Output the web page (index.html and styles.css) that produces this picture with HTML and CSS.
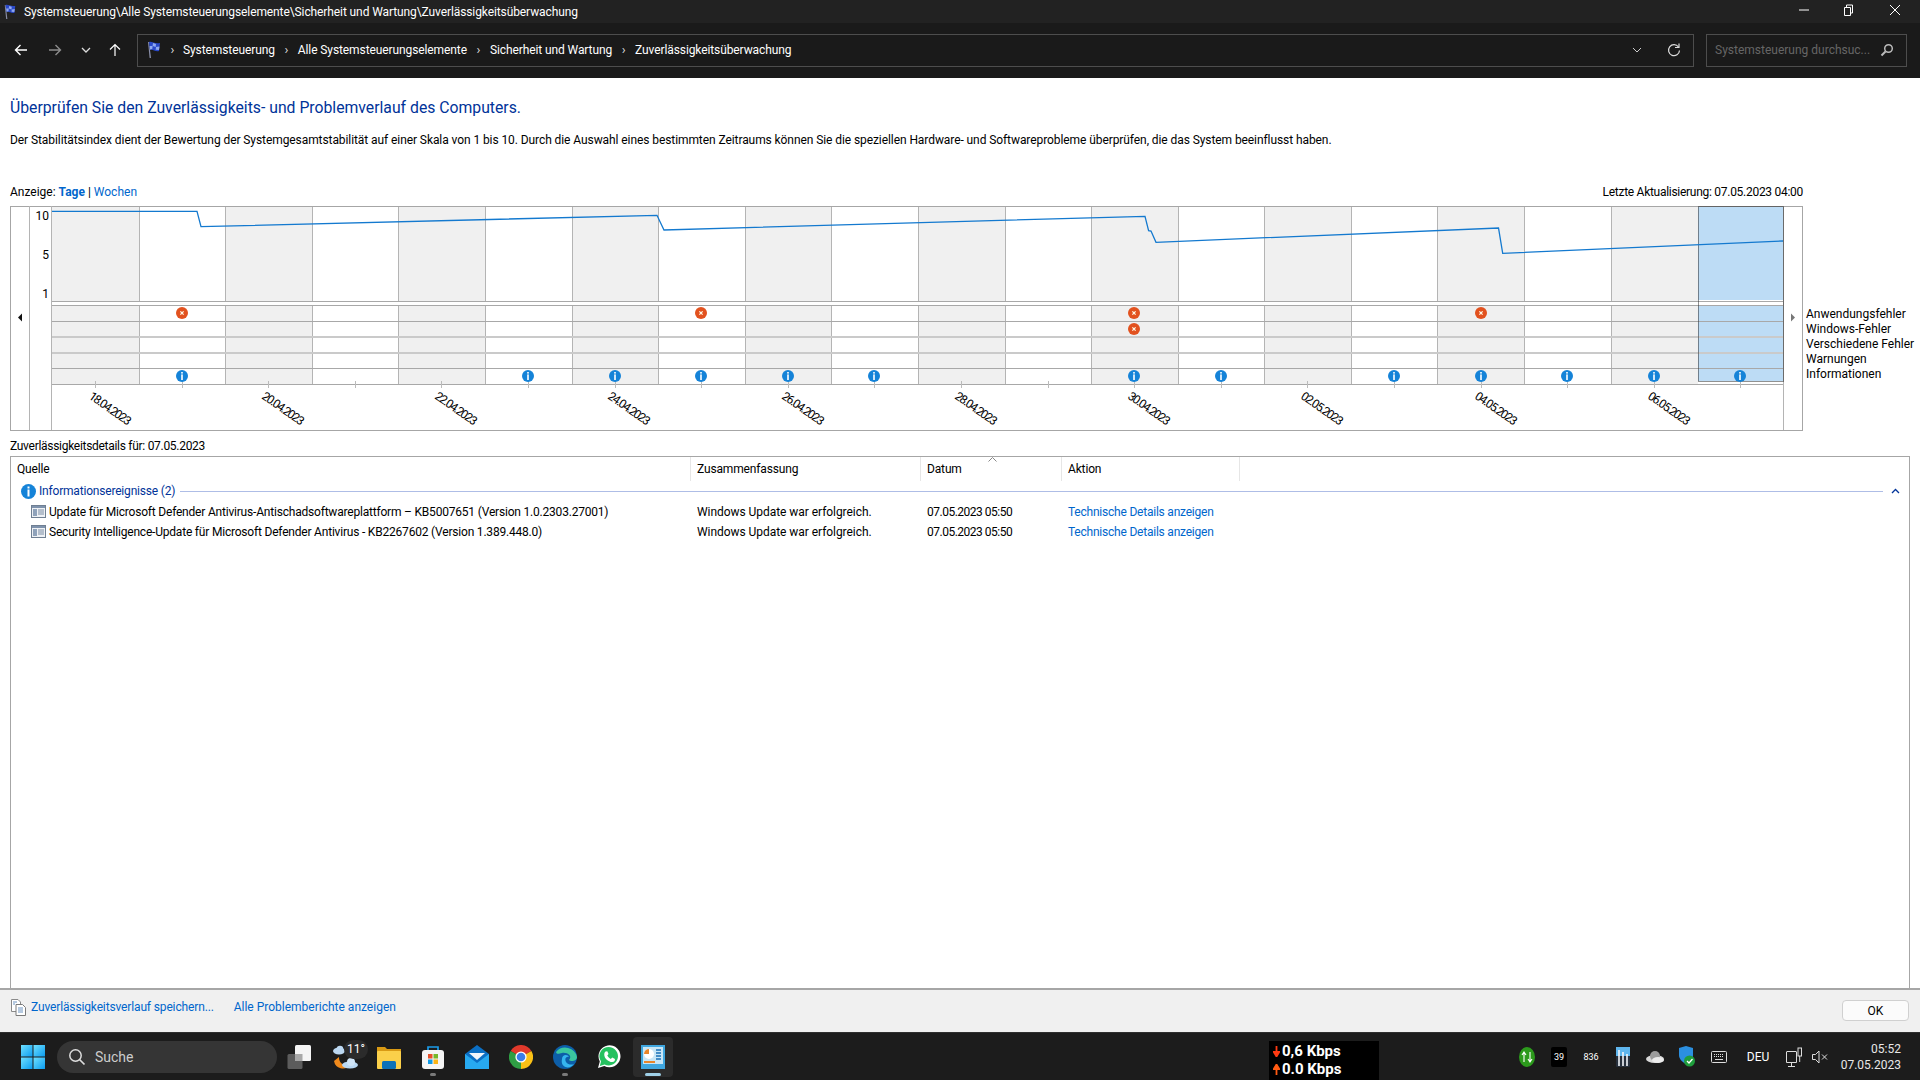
FILE: index.html
```html
<!DOCTYPE html>
<html lang="de">
<head>
<meta charset="utf-8">
<title>Zuverlässigkeitsüberwachung</title>
<link rel="stylesheet" href="styles.css">
</head>
<body>
<svg class="defs" width="0" height="0">
  <defs>
    <symbol id="flag" viewBox="0 0 16 18">
      <path d="M2 1 L3 1 L5 17 L3.6 17 Z" fill="#8a8fa8"/>
      <path d="M3 1 C6 0 8 3 14 2 L13 10 C9 11 7 8 4 9 Z" fill="#2a49c8"/>
      <path d="M7 2 L10 3 L9.7 6 L6.6 5 Z M3.6 5 L6.6 5 L6.3 8 L4 8.6 Z M10 6 L13.5 5.6 L13 9 L9.7 8.8 Z" fill="#8fa8f0"/>
    </symbol>
    <symbol id="err" viewBox="0 0 12 12">
      <circle cx="6" cy="6" r="6" fill="#e2521f"/>
      <path d="M4.4 4.4 L7.6 7.6 M7.6 4.4 L4.4 7.6" stroke="#ffe" stroke-width="1.2"/>
    </symbol>
    <symbol id="info" viewBox="0 0 12 12">
      <circle cx="6" cy="6" r="6" fill="#1583d8"/>
      <rect x="5.2" y="2" width="1.6" height="1.6" fill="#fff"/>
      <rect x="5.2" y="4.4" width="1.6" height="5.6" fill="#fff"/>
    </symbol>
    <symbol id="sheet" viewBox="0 0 15 15">
      <rect x="0.5" y="1.5" width="14" height="12" fill="#eef1f5" stroke="#6f7f92"/>
      <rect x="1" y="2" width="13" height="2" fill="#7f93ad"/>
      <rect x="2" y="5" width="4" height="7" fill="#8fa2ba"/>
      <path d="M7 6 H13 M7 8 H13 M7 10 H13" stroke="#7b8ca3"/>
    </symbol>
  </defs>
</svg>

<header class="titlebar">
  <svg class="flag-small"><use href="#flag"/></svg>
  <span class="title-text">Systemsteuerung\Alle Systemsteuerungselemente\Sicherheit und Wartung\Zuverlässigkeitsüberwachung</span>
  <div class="win-controls">
    <svg class="win-btn" viewBox="0 0 12 12"><path d="M1 6 H11" stroke="#fff"/></svg>
    <svg class="win-btn win-restore" viewBox="0 0 12 12"><path d="M2.5 3.5 H8.5 V11.5 H2.5 Z M4.5 3.5 V1 H10.5 V9 H8.5" stroke="#fff" fill="none"/></svg>
    <svg class="win-btn win-close" viewBox="0 0 12 12"><path d="M1 1 L11 11 M11 1 L1 11" stroke="#fff"/></svg>
  </div>
</header>

<nav class="navbar">
  <span class="nav-btn nav-back"><svg width="14" height="14" viewBox="0 0 14 14"><path d="M13 7 H1.5 M6.5 2 L1.5 7 L6.5 12" stroke="#fff" stroke-width="1.4" fill="none"/></svg></span>
  <span class="nav-btn nav-fwd"><svg width="14" height="14" viewBox="0 0 14 14"><path d="M1 7 H12.5 M7.5 2 L12.5 7 L7.5 12" stroke="#8c8c8c" stroke-width="1.4" fill="none"/></svg></span>
  <span class="nav-btn nav-hist"><svg width="10" height="8" viewBox="0 0 10 8"><path d="M1 2 L5 6 L9 2" stroke="#ddd" stroke-width="1.3" fill="none"/></svg></span>
  <span class="nav-btn nav-up"><svg width="14" height="14" viewBox="0 0 14 14"><path d="M7 13 V1.5 M2 6.5 L7 1.5 L12 6.5" stroke="#fff" stroke-width="1.2" fill="none"/></svg></span>
  <div class="address">
    <svg class="flag-addr"><use href="#flag"/></svg>
    <span class="crumb-sep crumb-sep-first">›</span>
    <span class="crumb">Systemsteuerung</span><span class="crumb-sep">›</span>
    <span class="crumb">Alle Systemsteuerungselemente</span><span class="crumb-sep">›</span>
    <span class="crumb">Sicherheit und Wartung</span><span class="crumb-sep">›</span>
    <span class="crumb">Zuverlässigkeitsüberwachung</span>
    <span class="addr-right">
      <svg width="10" height="8" viewBox="0 0 10 8"><path d="M1 2 L5 6 L9 2" stroke="#ccc" fill="none"/></svg>
      <svg width="14" height="14" viewBox="0 0 14 14"><path d="M11.5 4 A5.5 5.5 0 1 0 12.5 7.5" stroke="#ddd" stroke-width="1.2" fill="none"/><path d="M12 0.5 V4.5 H8" stroke="#ddd" stroke-width="1.2" fill="none"/></svg>
    </span>
  </div>
  <div class="searchbox">
    <span class="search-text">Systemsteuerung durchsuc...</span>
    <svg width="14" height="14" viewBox="0 0 14 14"><circle cx="8.5" cy="5.5" r="3.8" stroke="#bbb" stroke-width="1.5" fill="none"/><path d="M5.5 8.5 L1.5 12.5" stroke="#bbb" stroke-width="2"/></svg>
  </div>
</nav>

<main class="content">
  <h1 class="heading">Überprüfen Sie den Zuverlässigkeits- und Problemverlauf des Computers.</h1>
  <p class="desc">Der Stabilitätsindex dient der Bewertung der Systemgesamtstabilität auf einer Skala von 1 bis 10. Durch die Auswahl eines bestimmten Zeitraums können Sie die speziellen Hardware- und Softwareprobleme überprüfen, die das System beeinflusst haben.</p>
  <div class="view-row">
    <span>Anzeige: <b class="link">Tage</b> | <span class="link">Wochen</span></span>
    <span class="last-update">Letzte Aktualisierung: 07.05.2023 04:00</span>
  </div>

  <div class="chart-row">
    <svg class="chart" width="1793" height="225" viewBox="10 206 1793 225">
      <rect x="10.5" y="206.5" width="1792" height="224" fill="#fff" stroke="#a6a6a6"/>
      <g class="shade">
        <rect x="52" y="207" width="87" height="94"/><rect x="52" y="306" width="87" height="78"/>
        <rect x="225" y="207" width="87" height="94"/><rect x="225" y="306" width="87" height="78"/>
        <rect x="398" y="207" width="87" height="94"/><rect x="398" y="306" width="87" height="78"/>
        <rect x="572" y="207" width="86" height="94"/><rect x="572" y="306" width="86" height="78"/>
        <rect x="745" y="207" width="86" height="94"/><rect x="745" y="306" width="86" height="78"/>
        <rect x="918" y="207" width="87" height="94"/><rect x="918" y="306" width="87" height="78"/>
        <rect x="1091" y="207" width="87" height="94"/><rect x="1091" y="306" width="87" height="78"/>
        <rect x="1264" y="207" width="87" height="94"/><rect x="1264" y="306" width="87" height="78"/>
        <rect x="1437" y="207" width="87" height="94"/><rect x="1437" y="306" width="87" height="78"/>
        <rect x="1611" y="207" width="87" height="94"/><rect x="1611" y="306" width="87" height="78"/>
      </g>
      <g class="sel">
        <rect x="1698" y="207" width="86" height="93"/>
        <rect x="1698" y="306" width="86" height="75"/>
      </g>
      <g class="grid-v">
        <path d="M139.5 207V301M225.5 207V301M312.5 207V301M398.5 207V301M485.5 207V301M572.5 207V301M658.5 207V301M745.5 207V301M831.5 207V301M918.5 207V301M1005.5 207V301M1091.5 207V301M1178.5 207V301M1264.5 207V301M1351.5 207V301M1437.5 207V301M1524.5 207V301M1611.5 207V301"/>
        <path d="M139.5 305V384M225.5 305V384M312.5 305V384M398.5 305V384M485.5 305V384M572.5 305V384M658.5 305V384M745.5 305V384M831.5 305V384M918.5 305V384M1005.5 305V384M1091.5 305V384M1178.5 305V384M1264.5 305V384M1351.5 305V384M1437.5 305V384M1524.5 305V384M1611.5 305V384"/>
      </g>
      <g class="grid-h">
        <path d="M52 301.5H1784M52 305.5H1784M52 321.5H1784M52 368.5H1784M52 384.5H1784"/>
      </g>
      <path class="grid-h2" d="M52 337H1784M52 353H1784"/>
      <g class="grid-v">
        <path d="M29.5 206V430M51.5 206V430M1783.5 206V430"/>
      </g>
      <path class="ticks" d="M95.5 381V388M182.5 381V388M268.5 381V388M355.5 381V388M441.5 381V388M528.5 381V388M615.5 381V388M701.5 381V388M788.5 381V388M874.5 381V388M961.5 381V388M1048.5 381V388M1134.5 381V388M1221.5 381V388M1307.5 381V388M1394.5 381V388M1481.5 381V388M1567.5 381V388M1654.5 381V388M1740.5 381V388"/>
      <rect class="sel-focus" x="1698.5" y="206.5" width="85" height="175"/>
      <polyline class="graph" points="52,211.3 197,211.3 201,226.7 657,215.3 664,230 1145,216.3 1148.6,230.7 1151,231 1156,242.3 1498.5,228 1502.7,253.3 1783,241"/>

      <text class="ylab" x="49" y="220">10</text>
      <text class="ylab" x="49" y="259">5</text>
      <text class="ylab" x="49" y="298">1</text>

      <path class="arrow-l" d="M22 313.5 V321.5 L18 317.5 Z"/>
      <path class="arrow-r" d="M1791 313.5 V321.5 L1795 317.5 Z"/>

      <use href="#err" x="176" y="307" width="12" height="12"/>
      <use href="#err" x="695" y="307" width="12" height="12"/>
      <use href="#err" x="1128" y="307" width="12" height="12"/>
      <use href="#err" x="1128" y="323" width="12" height="12"/>
      <use href="#err" x="1475" y="307" width="12" height="12"/>

      <use href="#info" x="176" y="370" width="12" height="12"/>
      <use href="#info" x="522" y="370" width="12" height="12"/>
      <use href="#info" x="609" y="370" width="12" height="12"/>
      <use href="#info" x="695" y="370" width="12" height="12"/>
      <use href="#info" x="782" y="370" width="12" height="12"/>
      <use href="#info" x="868" y="370" width="12" height="12"/>
      <use href="#info" x="1128" y="370" width="12" height="12"/>
      <use href="#info" x="1215" y="370" width="12" height="12"/>
      <use href="#info" x="1388" y="370" width="12" height="12"/>
      <use href="#info" x="1475" y="370" width="12" height="12"/>
      <use href="#info" x="1561" y="370" width="12" height="12"/>
      <use href="#info" x="1648" y="370" width="12" height="12"/>
      <use href="#info" x="1734" y="370" width="12" height="12"/>

      <g class="dates">
        <text x="88" y="398" transform="rotate(35 88 398)">18.04.2023</text>
        <text x="261" y="398" transform="rotate(35 261 398)">20.04.2023</text>
        <text x="434" y="398" transform="rotate(35 434 398)">22.04.2023</text>
        <text x="607" y="398" transform="rotate(35 607 398)">24.04.2023</text>
        <text x="781" y="398" transform="rotate(35 781 398)">26.04.2023</text>
        <text x="954" y="398" transform="rotate(35 954 398)">28.04.2023</text>
        <text x="1127" y="398" transform="rotate(35 1127 398)">30.04.2023</text>
        <text x="1300" y="398" transform="rotate(35 1300 398)">02.05.2023</text>
        <text x="1474" y="398" transform="rotate(35 1474 398)">04.05.2023</text>
        <text x="1647" y="398" transform="rotate(35 1647 398)">06.05.2023</text>
      </g>
    </svg>
    <ul class="legend">
      <li>Anwendungsfehler</li>
      <li>Windows-Fehler</li>
      <li>Verschiedene Fehler</li>
      <li>Warnungen</li>
      <li>Informationen</li>
    </ul>
  </div>

  <div class="details-label">Zuverlässigkeitsdetails für: 07.05.2023</div>

  <section class="table">
    <div class="thead">
      <span class="th">Quelle</span>
      <span class="th">Zusammenfassung</span>
      <span class="th">Datum</span>
      <span class="th">Aktion</span>
      <svg class="sort-caret" width="9" height="5" viewBox="0 0 9 5"><path d="M0.5 4.5 L4.5 0.5 L8.5 4.5" stroke="#888" fill="none"/></svg>
    </div>
    <div class="group">
      <svg class="group-icon"><use href="#info"/></svg>
      <span class="group-text">Informationsereignisse (2)</span>
      <span class="group-line"></span>
      <svg class="group-chev" width="9" height="6" viewBox="0 0 9 6"><path d="M1 5 L4.5 1.5 L8 5" stroke="#003399" stroke-width="1.3" fill="none"/></svg>
    </div>
    <div class="row">
      <span class="src"><svg class="row-icon"><use href="#sheet"/></svg>Update für Microsoft Defender Antivirus-Antischadsoftwareplattform – KB5007651 (Version 1.0.2303.27001)</span>
      <span class="cell">Windows Update war erfolgreich.</span>
      <span class="cell cell-date">07.05.2023 05:50</span>
      <span class="cell cell-link link">Technische Details anzeigen</span>
    </div>
    <div class="row">
      <span class="src"><svg class="row-icon"><use href="#sheet"/></svg>Security Intelligence-Update für Microsoft Defender Antivirus - KB2267602 (Version 1.389.448.0)</span>
      <span class="cell">Windows Update war erfolgreich.</span>
      <span class="cell cell-date">07.05.2023 05:50</span>
      <span class="cell cell-link link">Technische Details anzeigen</span>
    </div>
  </section>
</main>

<footer class="footer">
  <svg class="save-icon" width="15" height="17" viewBox="0 0 15 17"><path d="M0.5 0.5 H7 L9.5 3 V12.5 H0.5 Z" fill="#fff" stroke="#8a8a8a"/><path d="M5 5.5 H11.5 L14.5 8.5 V16.5 H5 Z" fill="#fff" stroke="#7a7a7a"/><path d="M2 3 H6 M2 5 H4 M7 9 H12 M7 11 H12 M7 13 H12" stroke="#6d93c0"/></svg>
  <span class="link foot-link1">Zuverlässigkeitsverlauf speichern...</span>
  <span class="link foot-link2">Alle Problemberichte anzeigen</span>
  <span class="ok-btn">OK</span>
</footer>

<div class="taskbar">
  <svg class="start" width="24" height="24" viewBox="0 0 24 24">
    <defs><linearGradient id="sg" x1="0" y1="0" x2="1" y2="1"><stop offset="0" stop-color="#6fe0ff"/><stop offset="1" stop-color="#0b9cf0"/></linearGradient></defs>
    <rect x="0" y="0" width="11.5" height="11.5" fill="url(#sg)"/><rect x="12.5" y="0" width="11.5" height="11.5" fill="url(#sg)"/><rect x="0" y="12.5" width="11.5" height="11.5" fill="url(#sg)"/><rect x="12.5" y="12.5" width="11.5" height="11.5" fill="url(#sg)"/>
  </svg>
  <div class="tb-search">
    <svg width="18" height="18" viewBox="0 0 18 18"><circle cx="7.5" cy="7.5" r="5.7" stroke="#ddd" stroke-width="1.5" fill="none"/><path d="M11.5 11.5 L16.5 16.5" stroke="#ddd" stroke-width="1.7"/></svg>
    <span>Suche</span>
  </div>
  <span class="app app-first"><svg width="26" height="24" viewBox="0 0 26 24"><rect x="0.5" y="9" width="15" height="15" rx="1.5" fill="#5c5c5c"/><rect x="8" y="0" width="16" height="16" rx="1.5" fill="#f4f4f4"/><rect x="8" y="9" width="7.5" height="7" fill="#a8a8a8"/></svg></span>
  <span class="app app-weather">
    <svg width="32" height="26" viewBox="0 0 32 26"><path d="M1 17 A9 9 0 0 0 17 21 A8 8 0 0 1 6 13 Z" fill="#f08a1c"/><ellipse cx="6" cy="7" rx="6" ry="3.500" fill="#bcd8f2"/><circle cx="7" cy="5" r="3.300" fill="#bcd8f2"/><ellipse cx="17" cy="21" rx="8" ry="3.500" fill="#b9d8f4"/><circle cx="18" cy="18" r="4" fill="#cfe4f7"/></svg>
    <span class="temp">11°</span>
  </span>
  <span class="app app-tight"><svg width="24" height="24" viewBox="0 0 24 24"><path d="M0 2 H8 L10 4 H24 V8 H0 Z" fill="#d99a14"/><rect x="0" y="6" width="24" height="18" rx="1" fill="#fbd04a"/><rect x="5" y="16" width="14" height="8" rx="1.5" fill="#0d72b8"/></svg></span>
  <span class="app app-gap has-dot"><svg width="24" height="24" viewBox="0 0 24 24"><path d="M7 6 V2 H17 V6" stroke="#1a9be8" stroke-width="1.7" fill="none"/><rect x="1" y="5" width="22" height="19" rx="3" fill="#f5f5f5"/><rect x="7" y="9" width="4.5" height="4.5" fill="#e8502a"/><rect x="12.5" y="9" width="4.5" height="4.5" fill="#76b82a"/><rect x="7" y="14.5" width="4.5" height="4.5" fill="#0f9be8"/><rect x="12.5" y="14.5" width="4.5" height="4.5" fill="#fbb416"/></svg></span>
  <span class="app app-gap"><svg width="24" height="24" viewBox="0 0 24 24"><path d="M0 9 L12 0 L24 9 V24 H0 Z" fill="#0b6fc4"/><path d="M4 8 H20 L12 15 Z" fill="#f2f6fb"/><path d="M0 9 L12 18 L24 9 V24 H0 Z" fill="#27a9f0"/></svg></span>
  <span class="app app-gap"><svg width="24" height="24" viewBox="0 0 24 24"><path d="M12 12 L1.6 6 A12 12 0 0 1 22.4 6 Z" fill="#e1392b"/><path d="M12 12 L22.4 6 A12 12 0 0 1 12 24 Z" fill="#fbc116"/><path d="M12 12 L12 24 A12 12 0 0 1 1.6 6 Z" fill="#2f9e44"/><circle cx="12" cy="12" r="5.6" fill="#fff"/><circle cx="12" cy="12" r="4.3" fill="#3b7de8"/></svg></span>
  <span class="app app-gap has-dot"><svg width="24" height="24" viewBox="0 0 24 24"><circle cx="12" cy="12" r="12" fill="#0d5ea8"/><path d="M3 7 A12 12 0 0 1 24 12 C24 16 18 17 16 15 C20 11 14 7 9 8 C6 8.600 4 10 3 7 Z" fill="#3bc7a0"/><path d="M9 14 C9 9 15 9 16 12 C14 11 11 13 13 17 C15 20 19 20 21 19 C17 25 7 23 9 14 Z" fill="#35b6f0"/></svg></span>
  <span class="app app-gap"><svg width="24" height="24" viewBox="0 0 24 24"><path d="M1 23 L2.800 16.500 A11 11 0 1 1 7.300 21 Z" fill="#fff"/><path d="M2.800 21 L4 16.500 A9.300 9.300 0 1 1 7.600 19.600 Z" fill="#25c15f"/><path d="M8.500 6.500 L10.300 6.300 L11.500 9 L10.300 10.500 C11 12 12.300 13.300 13.800 14 L15.200 12.600 L18 14 L17.600 16 C16 18 12 17 9.500 14.500 C7 12 6.500 8 8.500 6.500 Z" fill="#fff"/></svg></span>
  <span class="app app-gap app-active"><svg width="24" height="24" viewBox="0 0 24 24"><rect x="0" y="0" width="24" height="24" fill="#3fa7e0"/><rect x="2" y="2" width="20" height="17" fill="#c8e6f6"/><circle cx="8" cy="9" r="5" fill="#fff"/><path d="M8 9 V4 A5 5 0 0 0 3 9 Z" fill="#e8862a"/><path d="M3 17 H14" stroke="#e8862a" stroke-width="2"/><path d="M15 5 H20 M15 8 H20 M15 11 H20 M15 14 H20" stroke="#1a70b8" stroke-width="1.5"/></svg></span>

  <div class="netbox">
    <div class="net-line"><svg width="7" height="11" viewBox="0 0 7 11"><path d="M3.500 0 V8 M0.800 6 L3.500 10.500 L6.200 6 Z" stroke="#ff3a12" stroke-width="1.800" fill="#ff3a12"/></svg><span>0,6 Kbps</span></div>
    <div class="net-line"><svg width="7" height="11" viewBox="0 0 7 11"><path d="M3.500 11 V3 M0.800 5 L3.500 0.500 L6.200 5 Z" stroke="#ff5a12" stroke-width="1.800" fill="#ff5a12"/></svg><span>0.0 Kbps</span></div>
  </div>

  <div class="tray">
    <span class="tray-item"><svg width="16" height="20" viewBox="0 0 16 20"><ellipse cx="8" cy="10" rx="8" ry="10" fill="#2c9a1c"/><path d="M5 15 V6 M3 8 L5 5 L7 8 M11 5 V14 M9 12 L11 15 L13 12" stroke="#fff" stroke-width="1.100" fill="none"/></svg></span>
    <span class="tray-item"><span class="tray-39">39</span></span>
    <span class="tray-item tray-836">836</span>
    <span class="tray-item"><svg width="14" height="20" viewBox="0 0 14 20"><rect width="14" height="20" rx="1.500" fill="#27303c"/><rect x="0" y="0" width="14" height="9" fill="#5fb6ee"/><path d="M3 3 V19 M7 5 V19 M11 7 V19" stroke="#f2f6fa" stroke-width="1.600"/></svg></span>
    <span class="tray-item"><svg width="18" height="12" viewBox="0 0 18 12"><ellipse cx="9" cy="8" rx="9" ry="4" fill="#d8d8d8"/><circle cx="9" cy="5" r="5" fill="#9c9c9c"/><ellipse cx="12" cy="9" rx="6" ry="3" fill="#ececec"/></svg></span>
    <span class="tray-item"><svg width="16" height="21" viewBox="0 0 16 21"><path d="M7 0 L14 2 V9 C14 13 11 16 7 18 C3 16 0 13 0 9 V2 Z" fill="#2b8fe0"/><circle cx="10.500" cy="15" r="5.500" fill="#1f9e3c"/><path d="M8 15 L10 17 L13.500 13" stroke="#fff" stroke-width="1.300" fill="none"/></svg></span>
    <span class="tray-item"><svg width="16" height="12" viewBox="0 0 16 12"><rect x="0.500" y="0.500" width="15" height="11" rx="1" stroke="#ddd" fill="none"/><path d="M3 3.500 H13 M3 5.500 H13" stroke="#ddd" stroke-dasharray="1 1"/><path d="M4 8.500 H12" stroke="#ddd"/></svg></span>
    <span class="tray-lang">DEU</span>
    <span class="tray-icon"><svg width="16" height="20" viewBox="0 0 16 20"><path d="M1 4.500 H10 M0.500 4.500 V15.500 H10.500 V4.500 M5.500 15.500 V19 M2 19.500 H9" stroke="#ddd" fill="none"/><rect x="12" y="1" width="3.500" height="8" stroke="#ddd" fill="none"/><path d="M13.700 9 V15" stroke="#ddd"/></svg></span>
    <span class="tray-icon tray-speaker"><svg width="16" height="14" viewBox="0 0 16 14"><path d="M0.500 4.500 H3.500 L7 1 V13 L3.500 9.500 H0.500 Z" stroke="#ddd" fill="none"/><path d="M10 4.500 L15 9.500 M15 4.500 L10 9.500" stroke="#ddd"/></svg></span>
    <div class="clock"><span>05:52</span><span>07.05.2023</span></div>
  </div>
</div>
</body>
</html>
```

FILE: styles.css
```css
* { box-sizing: border-box; }
html, body { margin: 0; padding: 0; }
body {
  width: 1920px;
  height: 1080px;
  overflow: hidden;
  display: flex;
  flex-direction: column;
  font-family: Roboto, "Noto Sans", sans-serif;
  font-size: 12px;
  line-height: 16px;
  color: #000;
  background: #fff;
}
.defs { position: absolute; }
.link { color: #0066cc; }

.titlebar {
  height: 23px;
  background: #222;
  color: #fff;
  display: flex;
  align-items: center;
  flex: none;
}
.flag-small { width: 14px; height: 16px; margin-left: 3px; }
.title-text { margin-left: 7px; letter-spacing: -0.1px; }
.win-controls { margin-left: auto; display: flex; margin-right: 19px; margin-top: -4px; }
.win-btn { width: 12px; height: 12px; }
.win-restore { margin-left: 32px; }
.win-close { margin-left: 35px; }

.navbar {
  height: 55px;
  background: #1a1a1a;
  flex: none;
  display: flex;
  align-items: center;
  padding-right: 13px;
  padding-bottom: 1px;
}
.nav-btn { display: flex; justify-content: center; align-items: center; height: 20px; }
.nav-back { width: 42px; }
.nav-fwd { width: 26px; }
.nav-hist { width: 36px; }
.nav-up { width: 22px; }
.address {
  margin-left: 11px;
  flex: 1;
  height: 33px;
  border: 1px solid #4d4d4d;
  display: flex;
  align-items: center;
  padding-left: 8px;
  color: #fff;
}
.flag-addr { width: 16px; height: 18px; }
.crumb { white-space: nowrap; letter-spacing: -0.1px; }
.crumb-sep { width: 23px; text-align: center; color: #ddd; font-size: 13px; }
.crumb-sep-first { width: 21px; }
.addr-right { margin-left: auto; display: flex; align-items: center; gap: 25px; padding-right: 12px; }
.searchbox {
  margin-left: 12px;
  width: 201px;
  height: 33px;
  border: 1px solid #4d4d4d;
  display: flex;
  align-items: center;
  justify-content: space-between;
  padding: 0 12px 0 8px;
  color: #666;
}

.content { flex: 1; display: flex; flex-direction: column; padding: 0 10px; min-height: 0; }
.heading { font-size: 15.75px; font-weight: 400; line-height: 22px; height: 22px; margin: 19px 0 0; color: #003399; }
.desc { margin: 13px 0 0; height: 16px; white-space: nowrap; letter-spacing: -0.08px; }
.view-row { margin-top: 36px; height: 16px; width: 1793px; display: flex; justify-content: space-between; }
.view-row b { font-weight: 700; }
.last-update { letter-spacing: -0.28px; }
.chart-row { margin-top: 6px; height: 225px; display: flex; flex: none; }
.chart { display: block; flex: none; }
.chart text { font-family: Roboto, "Noto Sans", sans-serif; font-size: 12px; fill: #000; }
.chart .ylab { text-anchor: end; }
.chart .dates text { letter-spacing: -1.3px; }
.shade rect { fill: #f0f0f0; }
.sel rect { fill: #bddcf5; }
.grid-v path { stroke: #b4b4b4; fill: none; }
.grid-h path { stroke: #a8a8a8; fill: none; }
.grid-h2 { stroke: #cacaca; stroke-width: 2; fill: none; }
.ticks { stroke: #bbb; fill: none; }
.sel-focus { fill: none; stroke: #222; stroke-dasharray: 1 1; }
.graph { fill: none; stroke: #1379cf; stroke-width: 1.3; }
.arrow-l { fill: #111; }
.arrow-r { fill: #777; }
.legend { list-style: none; margin: 0; padding: 101px 0 0 3px; flex: none; white-space: nowrap; }
.legend li { height: 15px; line-height: 15px; }

.details-label { margin-top: 7px; height: 16px; flex: none; letter-spacing: -0.29px; }
.table {
  margin-top: 2px;
  flex: 1;
  width: 1900px;
  border: 1px solid #a6a6a6;
  border-bottom: 0;
  min-height: 0;
}
.thead, .row { display: grid; grid-template-columns: 680px 230px 141px 178px; }
.thead { height: 24px; position: relative; }
.th { padding-left: 6px; line-height: 24px; border-right: 1px solid #e6e6e6; letter-spacing: -0.15px; }
.sort-caret { position: absolute; left: 977px; top: 0; }
.group { height: 20px; display: flex; align-items: center; padding-left: 10px; color: #003399; }
.group-icon { width: 15px; height: 15px; flex: none; }
.group-text { margin-left: 3px; white-space: nowrap; letter-spacing: -0.19px; }
.group-line { flex: 1; height: 1px; background: #aebde6; margin: 0 8px 0 5px; }
.group-chev { margin-right: 9px; flex: none; }
.row { height: 20px; align-items: center; padding-top: 1px; }
.src { display: flex; align-items: center; padding-left: 20px; white-space: nowrap; letter-spacing: -0.2px; }
.row-icon { width: 15px; height: 15px; margin-right: 3px; flex: none; }
.cell { padding-left: 6px; white-space: nowrap; letter-spacing: -0.05px; }
.cell-date { letter-spacing: -0.5px; }
.cell-link { letter-spacing: -0.22px; }

.footer {
  height: 44px;
  flex: none;
  background: #f0f0f0;
  border-top: 2px solid #a6a6a6;
  display: flex;
  align-items: center;
  padding: 0 11px 8px 11px;
}
.save-icon { flex: none; }
.foot-link1 { margin-left: 5px; letter-spacing: -0.14px; }
.foot-link2 { margin-left: 20px; }
.ok-btn {
  margin-left: auto;
  margin-top: 7px;
  width: 67px;
  height: 21px;
  line-height: 20px;
  text-align: center;
  background: #fbfbfb;
  border: 1px solid #d0d0d0;
  border-radius: 4px;
}

.taskbar {
  height: 48px;
  flex: none;
  background: #1c1c1c;
  border-top: 1px solid #2e2e2e;
  color: #fff;
  display: flex;
  align-items: center;
  padding-left: 21px;
}
.start { flex: none; }
.tb-search {
  margin-left: 12px;
  width: 220px;
  height: 32px;
  border-radius: 16px;
  background: #353535;
  display: flex;
  align-items: center;
  padding-left: 11px;
  gap: 9px;
  flex: none;
  font-size: 14px;
  color: #ccc;
}
.app { width: 40px; height: 40px; display: flex; align-items: center; justify-content: center; position: relative; flex: none; }
.app-first { margin-left: 3px; }
.app-weather { margin-left: 9px; }
.app-gap { margin-left: 4px; }
.temp {
  position: absolute; left: 15px; top: 3px; width: 24px; height: 19px;
  border-radius: 10px; background: #2b2b2b; font-size: 12px; line-height: 19px; text-align: center;
}
.has-dot::after {
  content: ""; position: absolute; left: 17px; bottom: 1px; width: 6px; height: 3px; border-radius: 2px; background: #7a7a7a;
}
.app-active { background: #2b2b2b; border-radius: 4px; }
.app-active::after {
  content: ""; position: absolute; left: 12px; bottom: 1px; width: 16px; height: 3px; border-radius: 2px; background: #9fd0e8;
}
.netbox {
  margin-left: 596px;
  align-self: flex-end;
  width: 110px;
  height: 39px;
  background: #000;
  padding: 1px 0 0 4px;
  font-weight: 700;
  font-size: 15px;
  flex: none;
}
.net-line { height: 18px; line-height: 18px; display: flex; align-items: center; gap: 2px; }
.tray { margin-left: 132px; display: flex; align-items: center; flex: none; }
.tray-item { width: 32px; height: 24px; display: flex; align-items: center; justify-content: center; }
.tray-39 { width: 16px; height: 20px; background: #000; border-radius: 2px; font-size: 9px; line-height: 20px; text-align: center; }
.tray-836 { font-size: 9px; }
.tray-lang { width: 46px; text-align: center; font-size: 12px; }
.tray-icon { width: 26px; display: flex; justify-content: center; }
.tray-speaker { width: 25px; }
.clock { width: 69px; display: flex; flex-direction: column; align-items: flex-end; font-size: 12px; line-height: 16px; color: #e8e8e8; }
```
